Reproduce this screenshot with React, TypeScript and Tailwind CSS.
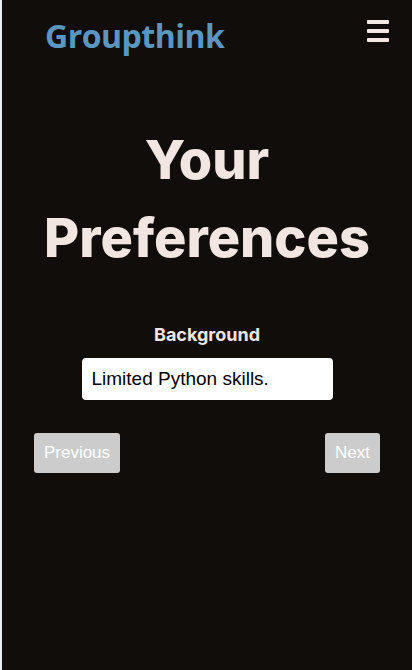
export default function App() {
  return (
    <div className="flex h-[670px] w-[412px] bg-[#e9eef2]">
      <div className="ml-[2px] flex flex-1 flex-col bg-[#110d0a]">
        <header className="flex items-start justify-between pl-[43px] pr-[23px] pt-[14px]">
          <h1 className="font-['Open_Sans',sans-serif] text-[32px] font-bold leading-[44px] tracking-[-0.5px] text-[#5a96c0]">
            Groupthink
          </h1>
          <button className="mt-[6px] flex w-[22px] flex-col gap-[5px]" aria-label="Menu">
            <span className="h-[4px] rounded-[1px] bg-[#f3e8e3]" />
            <span className="h-[4px] rounded-[1px] bg-[#f3e8e3]" />
            <span className="h-[4px] rounded-[1px] bg-[#f3e8e3]" />
          </button>
        </header>

        <h2 className="mt-[63px] text-center font-['Inter',sans-serif] text-[54px] font-extrabold leading-[78px] text-[#f1e6e1]">
          Your
          <br />
          Preferences
        </h2>

        <div className="mt-[45px] flex flex-col items-center">
          <label className="font-['Inter',sans-serif] text-[18px] font-bold leading-[26px] text-[#f1e6e1]">
            Background
          </label>
          <input
            defaultValue="Limited Python skills."
            className="mt-[10px] h-[42px] w-[251px] rounded-[4px] bg-white px-[10px] font-['Liberation_Sans',sans-serif] text-[19px] text-black outline-none"
          />
        </div>

        <div className="mt-[33px] flex justify-between pl-[32px] pr-[32px]">
          <button className="h-[40px] w-[86px] rounded-[3px] bg-[#cccccc] font-['Liberation_Sans',sans-serif] text-[17px] text-white">
            Previous
          </button>
          <button className="h-[40px] w-[55px] rounded-[3px] bg-[#cccccc] font-['Liberation_Sans',sans-serif] text-[17px] text-white">
            Next
          </button>
        </div>
      </div>
    </div>
  );
}
